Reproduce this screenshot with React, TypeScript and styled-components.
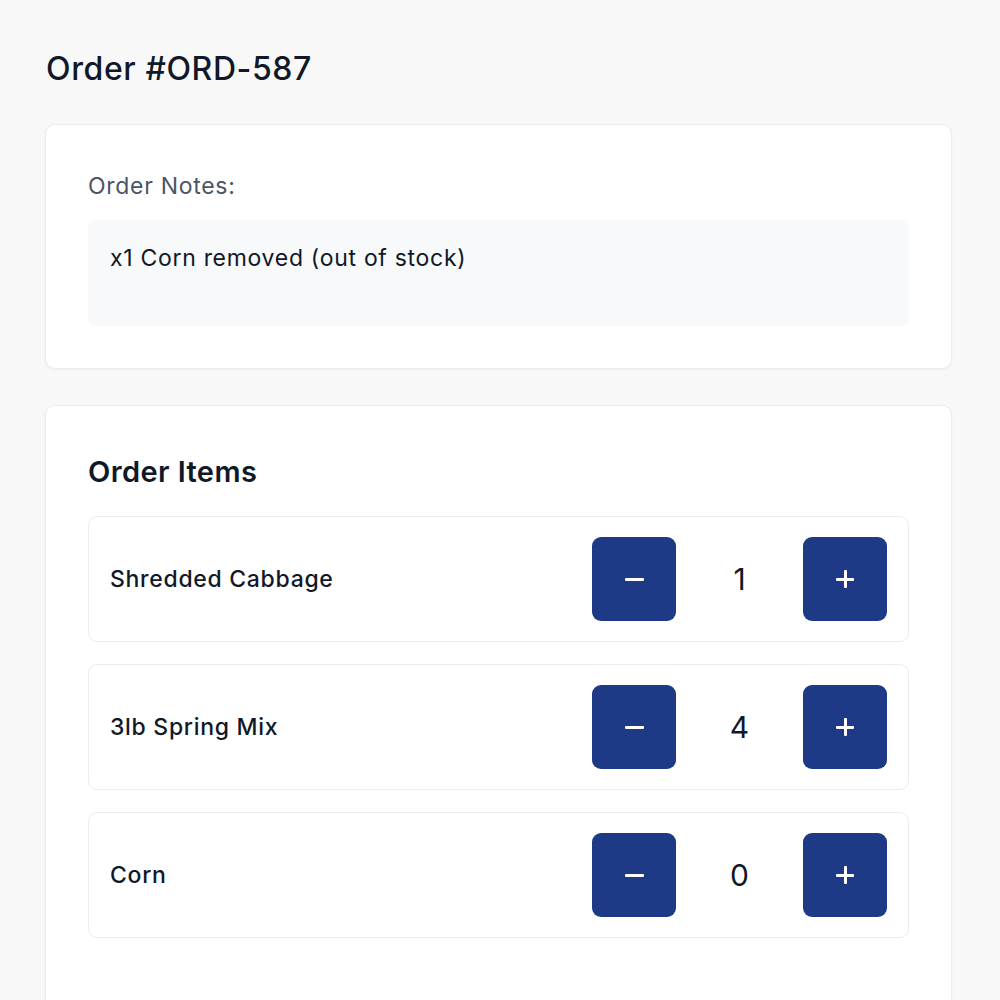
import React, { useState } from 'react'
import styled, { createGlobalStyle } from 'styled-components'

/////////////////////////////////////////////////////////////////////////////

type ItemType = { id: number; name: string; qty: number }

const initialItems: ItemType[] = [
  { id: 1, name: 'Shredded Cabbage', qty: 1 },
  { id: 2, name: '3lb Spring Mix', qty: 4 },
  { id: 3, name: 'Corn', qty: 0 },
]

const App: React.FC = () => {
  const [items, setItems] = useState<ItemType[]>(initialItems)

  const changeQty = (id: number, delta: number) => {
    setItems(prev =>
      prev.map(item =>
        item.id === id ? { ...item, qty: Math.max(0, item.qty + delta) } : item
      )
    )
  }

  return (
    <>
      <GlobalStyle />
      <PageView>
        <TitleText>Order #ORD-587</TitleText>

        <CardView>
          <LabelText>Order Notes:</LabelText>
          <NotesBox>x1 Corn removed (out of stock)</NotesBox>
        </CardView>

        <CardView tall>
          <SectionTitle>Order Items</SectionTitle>
          <ItemList>
            {items.map(item => (
              <ItemRow key={item.id}>
                <ItemName>{item.name}</ItemName>
                <Stepper>
                  <StepButton onClick={() => changeQty(item.id, -1)}>
                    <MinusSign />
                  </StepButton>
                  <QtyText>{item.qty}</QtyText>
                  <StepButton onClick={() => changeQty(item.id, 1)}>
                    <PlusSign />
                  </StepButton>
                </Stepper>
              </ItemRow>
            ))}
          </ItemList>
        </CardView>
      </PageView>
    </>
  )
}

// Styles

const GlobalStyle = createGlobalStyle`
  html, body {
    margin: 0;
    padding: 0;
    background: #f8f8f9;
    font-family: Inter, 'Noto Sans', sans-serif;
    color: #111827;
  }
`

const PageView = styled.div`
  display: flex;
  flex-direction: column;
  padding: 43px 48px 0 45px;
  height: 1000px;
  box-sizing: border-box;
  overflow: hidden;
`

const TitleText = styled.h1`
  margin: 0 0 29px 1px;
  font-size: 32px;
  line-height: 52px;
  font-weight: 500;
  letter-spacing: 0.6px;
  color: #111827;
`

const CardView = styled.div<{ tall?: boolean }>`
  background: #ffffff;
  border: 1px solid #ececef;
  border-radius: 10px;
  box-shadow: 0 1px 3px rgba(0, 0, 0, 0.05);
  padding: ${p => (p.tall ? '46px 42px 80px' : '46px 42px 42px')};
  margin-bottom: 36px;
  flex-shrink: 0;
`

const LabelText = styled.div`
  font-size: 23px;
  line-height: 30px;
  letter-spacing: 0.7px;
  color: #4b5563;
  margin-bottom: 19px;
`

const NotesBox = styled.div`
  background: #f8f9fa;
  border-radius: 8px;
  padding: 23px 22px 53px;
  font-size: 23px;
  line-height: 30px;
  letter-spacing: 0.7px;
  color: #111827;
`

const SectionTitle = styled.h2`
  margin: 0 0 24px;
  font-size: 29px;
  line-height: 40px;
  font-weight: 600;
  letter-spacing: 0.4px;
  color: #111827;
`

const ItemList = styled.div`
  display: flex;
  flex-direction: column;
  gap: 22px;
`

const ItemRow = styled.div`
  display: flex;
  align-items: center;
  justify-content: space-between;
  border: 1px solid #ececef;
  border-radius: 9px;
  padding: 20px 21px;
`

const ItemName = styled.div`
  font-size: 23px;
  font-weight: 500;
  letter-spacing: 0.7px;
  color: #111827;
`

const Stepper = styled.div`
  display: flex;
  align-items: center;
`

const StepButton = styled.button`
  width: 84px;
  height: 84px;
  border: none;
  border-radius: 9px;
  background: #1e3a86;
  display: flex;
  align-items: center;
  justify-content: center;
  cursor: pointer;
  padding: 0;
`

const QtyText = styled.div`
  width: 127px;
  text-align: center;
  font-size: 30px;
  font-weight: 400;
  color: #111827;
`

const MinusSign = styled.span`
  display: block;
  width: 19px;
  height: 3px;
  background: #ffffff;
  border-radius: 1px;
`

const PlusSign = styled.span`
  position: relative;
  display: block;
  width: 18px;
  height: 18px;

  &::before,
  &::after {
    content: '';
    position: absolute;
    background: #ffffff;
    border-radius: 1px;
  }
  &::before {
    left: 0;
    top: 8px;
    width: 18px;
    height: 2.5px;
  }
  &::after {
    left: 8px;
    top: 0;
    width: 2.5px;
    height: 18px;
  }
`

export default App
